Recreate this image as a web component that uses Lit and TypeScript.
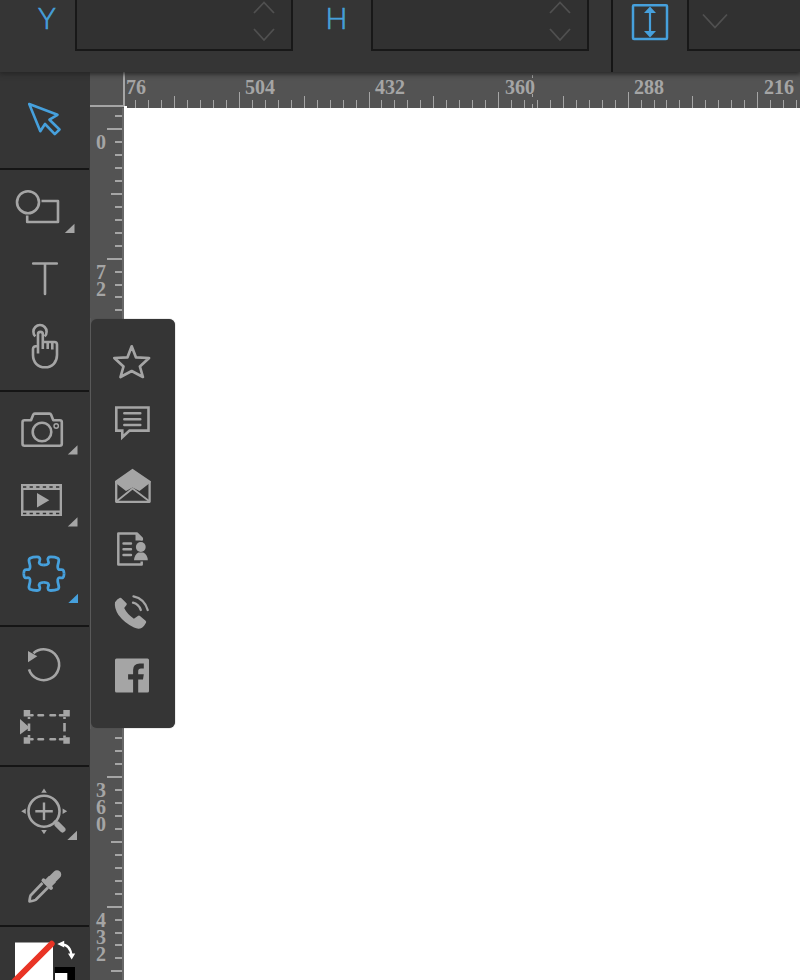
import { LitElement, html, svg, css } from "lit";
import { customElement } from "lit/decorators.js";

const corner = (x: number, y: number) =>
  svg`<path class="fill" d="M${x} ${y}v-9.3l-9.7 9.3z"/>`;

// Each tool occupies a row of the palette; its view box is expressed in palette space.
const tools = [
  { group: 0, y: 72, h: 96, active: true, art: svg`<path d="M29.2 104l28.3 10.8-8 4.9 10 9.8-4.7 4.6-9.8-10.1-4.7 7.2z"/>` },
  { group: 1, y: 170, h: 75, art: svg`<circle cx="28" cy="202.2" r="11"/><path d="M41.5 201H58v21H27.2v-6.5"/>${corner(74.5, 233)}` },
  { group: 1, y: 245, h: 67, art: svg`<path d="M33.2 263.5h23.6M45 264v30" stroke-linecap="round"/>` },
  { group: 1, y: 312, h: 78, art: svg`<path d="M35.300 336.300a6.600 6.600 0 1 1 9.400 0"/><path d="M38 353.500v-19.200a2.400 2.400 0 0 1 4.800 0V349M43 342H54.500q2.500 0 2.500 2.500V355c0 7-4.500 12.300-12 12.300s-12-5.300-12-12.300v-6q0-3 4.500-3M47.700 342v7M52.300 342v7.500"/>` },
  { group: 2, y: 392, h: 73, art: svg`<path d="M24.500 420.300H31l2.200-5.500q.4-1.200 1.600-1.200H49.500q1.200 0 1.600 1.200l2.200 5.500H59.800q2 0 2 2V443.800q0 2-2 2H24.500q-2 0-2-2V422.300q0-2 2-2z"/><circle cx="42" cy="432" r="9.300"/><circle cx="56.200" cy="426" r="2.200" stroke-width="1.400"/>${corner(77.5, 454.5)}` },
  { group: 2, y: 465, h: 75, art: svg`<path class="fill" fill-rule="evenodd" d="M21 484h41v32H21zM23.500 490v20.500h36.200v-20.500z"/><path class="hole" d="M23 487h37M23 513.500h37"/><path class="fill" d="M37 493l12.300 7.300L37 507.500z"/>${corner(77.5, 526.5)}` },
  { group: 2, y: 540, h: 85, active: true, art: svg`<g stroke-width="2.800" transform="translate(43.900 573.700)">${[[1, 1], [-1, 1], [1, -1], [-1, -1]].map(([a, b]) => svg`<path transform="scale(${a} ${b})" d="M0-8.700c4.200 0 5.500-1.600 4.300-4.200-1.200-2.800.4-3.900 2.600-3.900 3 0 5.200.4 7 1.300 1.800 1 1 3 .5 5-.8 3-.8 5.500.5 6.300 1.700 1 5-2.300 5.300 4.200"/>`)}</g>${corner(78, 603)}` },
  { group: 3, y: 627, h: 70, art: svg`<path d="M33.500 653.200A15.400 15.400 0 1 1 29 669.300"/><path class="fill" d="M28 651l9.300 5.300-9.300 6z"/>` },
  { group: 3, y: 697, h: 68, art: svg`<path class="fill" d="M23.700 710h6.500v6.500h-6.500zM63.300 710h6.500v6.500h-6.500zM23.700 737.300h6.500v6.500h-6.500zM63.300 737.300h6.500v6.500h-6.500zM20 719l9.500 8.500-9.500 7z"/><path stroke-linecap="round" d="M31 715.200h1.500M38.500 715.200h4.500M50.500 715.200h4.500M60 715.200h3M31 739.300h1.500M38.500 739.300h4.500M50.500 739.300h4.500M60 739.300h3"/><path d="M64.500 723v8.500M29 717v2M29 723.500v7.500M29 735v2.500M64.500 717v2M64.500 735.500v2"/>` },
  { group: 4, y: 767, h: 83, art: svg`<circle cx="44" cy="811.200" r="15.500"/><path stroke-width="2.400" d="M35.300 811.200h17.500M44 802.500V820"/><path stroke-width="6" stroke-linecap="round" d="M57.500 824.500l5 5"/><path d="M54 821l3 3"/><path class="fill" d="M44 788.500l2.800 4.200h-5.600zM44 834.300l2.800-4.200h-5.600zM21.200 811.300l4.600-2.700v5.400zM67.200 811.300l-4.600-2.700v5.400z"/>${corner(77, 840)}` },
  { group: 4, y: 850, h: 75, art: svg`<path stroke-width="8.500" stroke-linecap="round" d="M57 874.500l-6 6"/><path stroke-width="9.500" d="M52.500 879l-6 6"/><path stroke-width="4" stroke-linecap="round" d="M43.500 880.300l7.500 7.500"/><path stroke-width="2.700" d="M42.500 883L30.800 895.200q-.8 1-1.300 6.300 5-.8 6.300-1.800L48 887.500"/>` },
];

const flyoutIcons = [
  svg`<path stroke-width="2.700" d="M131.700 346.300l4.200 11 13.200.7-9.200 8.500 3 10.500-11.200-6-11.200 6 3-10.500-9.200-8.500 13.200-.7z"/>`,
  svg`<path stroke-width="2.600" stroke-linejoin="miter" d="M116.300 407.500h32.200v23.100h-19l-7.200 6.700v-6.700h-6z"/><path stroke-width="2.500" stroke-linecap="round" d="M124.300 413.200h16M124.300 419.200h16M124.300 425h16"/>`,
  svg`<path class="fill" d="M115 481l17.500-12.200L150.500 481v1.500l-11 8.500-7-3.500-6.500 3.500-11-8.500z"/><path stroke-width="2.300" d="M116.200 481v20.800h33.400V481"/><path stroke-width="1.800" d="M117 501l15.500-12.500L149 501"/>`,
  svg`<path stroke-width="2.500" d="M141.700 561.500v3h-23.400v-31h18.500l5 5v2"/><path class="fill" d="M135.500 533.500l7 7h-7z"/><path stroke-width="2.400" stroke-linecap="round" d="M123.500 543.500h7.500M123.500 549.300h7.500M123.500 555h7.500"/><circle class="fill" cx="140.800" cy="547" r="4.900"/><path class="fill" d="M134 560.300q.5-5.800 4.300-7.800h5q4.200 2 4.500 7.800z"/>`,
  svg`<path class="fill" d="M115 602.300q2-3.300 5-4.500.8-.3 1.500.4l5 5q.7.7 0 1.700l-2.300 3.200q2.800 6 9.700 10.700l4.300-3q1-.6 1.800.2l5.600 4.800q1 .9.4 1.900-1.500 3-4 5-3.500 2-8-.2-9.500-4.500-15.500-12.500-4.500-7-3.500-12.700z"/><path stroke-width="2.300" stroke-linecap="round" d="M133 602.700q5.500 1.200 7.800 7.300M133.500 596.300q11 2.300 14.200 13.700"/>`,
  svg`<path class="fill" fill-rule="evenodd" d="M116.500 658.500h31q1.500 0 1.500 1.500v31q0 1.500-1.500 1.500h-9.300V679.500h4.800l.8-5.200h-5.600v-3q0-2.800 2.800-2.800h2.800v-5h-4q-6.700 0-6.700 6.500v4.300h-5v5.200h5v13h-16.600q-1.500 0-1.500-1.500v-31q0-1.500 1.500-1.500z"/>`,
];

@customElement("tool-palette")
class ToolPalette extends LitElement {
  static styles = css`
    :host { display: block; width: 90px; background: #353535; overflow: hidden; flex: none; }
    .group { width: 89px; border-bottom: 2px solid #151515; }
    svg { display: block; fill: none; stroke: #a5a5a5; stroke-width: 2.6; stroke-linejoin: round; --ink: #a5a5a5; }
    svg.active { stroke: #46a0dc; --ink: #46a0dc; }
    .fill { fill: var(--ink); stroke: none; }
    .hole { stroke: #303030; stroke-width: 1.700; stroke-dasharray: 3.300 3.300; }
    .plain { stroke: none; }
    .swap { fill: none; stroke: #fff; stroke-width: 2.200; }
  `;
  render() {
    return html`
      ${[0, 1, 2, 3, 4].map((g) => html`<div class="group">
        ${tools.filter((t) => t.group === g).map((t) => html`
          <svg class=${t.active ? "active" : ""} width="89" height=${t.h} viewBox="0 ${t.y} 89 ${t.h}">${t.art}</svg>`)}
      </div>`)}
      <svg class="plain" width="89" height="53" viewBox="0 927 89 53">
        <path fill="#000" d="M54.700 967H75v13H54.700z"/>
        <path fill="#fff" d="M55 973h12.300v7H55zM15 942.500h38V980H15z"/>
        <path stroke="#e93425" stroke-width="6" stroke-linecap="round" d="M51.700 943.800L15 980.500"/>
        <path class="swap" d="M61 944.300q9.700 0 10.500 12"/>
        <path fill="#fff" d="M57.200 944l7-3.200v6.600zM71.700 959.500l-3.700-6h7.200z"/>
      </svg>`;
  }
}

@customElement("canvas-rulers")
class CanvasRulers extends LitElement {
  static styles = css`
    :host { display: grid; grid-template: 36px 872px / 34px 676px; background: #535353; }
    svg { display: block; }
    text { font: bold 20px "Liberation Serif", serif; fill: #a5a5a5; }
    .page { background: #fff; }
    .tick { fill: #a5a5a5; }
  `;
  render() {
    const across = [], down = [];
    for (let i = 2; i < 54; i++) {
      const top = i % 10 === 0 ? 92 : i % 5 === 0 ? 96 : 100;
      across.push(svg`<path class="tick" d="M${Math.floor(109.9 + i * 12.955)} ${top}h1v${108 - top}h-1z"/>`);
    }
    for (let i = -1; i < 67; i++) {
      const left = i % 10 === 0 ? 107 : i % 5 === 0 ? 111 : 115;
      down.push(svg`<path class="tick" d="M${left} ${Math.round(128 + i * 12.96)}h${122 - left}v2h${left - 122}z"/>`);
    }
    return html`
      <svg width="34" height="36" viewBox="90 72 34 36"><path class="tick" d="M90 105h34v2H90zM123 72h1v34h-1z"/></svg>
      <svg width="676" height="36" viewBox="124 72 676 36">
        <path class="tick" d="M124 72h1v34h-1z"/>${across}
        ${["76", "504", "432", "360", "288", "216"].map((n, i) => svg`<text x=${[126, 245, 375, 505, 634, 764][i]} y="94">${n}</text>`)}
        <path class="tick" d="M532 75h1v3h-1zM532 94h1v3h-1zM532 104h1v4h-1z"/>
        <path fill="#fff" d="M124 106h3v2h-3z"/>
      </svg>
      <svg width="34" height="872" viewBox="90 108 34 872">
        <path fill="#686868" d="M122 108h2v872h-2z"/>${down}
        ${[["0", 149], ["72", 279], ["360", 797], ["432", 927]].map(([n, y]) =>
          [...(n as string)].map((c, i) => svg`<text x="96" y=${(y as number) + i * 17}>${c}</text>`))}
      </svg>
      <div class="page"></div>`;
  }
}

@customElement("app-root")
class AppRoot extends LitElement {
  static styles = css`
    :host { display: block; position: relative; width: 800px; height: 980px; overflow: hidden; background: #353535; }
    .bar { position: relative; z-index: 1; display: flex; box-sizing: border-box; height: 72px; background: #353535; box-shadow: 0 1px 5px 1px #252525; }
    .bar > * { flex: none; }
    .label { box-sizing: border-box; height: 50px; font: 300 29px/35px Lato, sans-serif; color: #46a0dc; -webkit-text-stroke: 0.7px #46a0dc; text-align: center; }
    .y { width: 75px; padding-left: 19px; }
    .h { width: 78px; padding-left: 9px; }
    .field { box-sizing: border-box; width: 218px; height: 51px; border: solid #181818; border-width: 0 2px 2px; background: #313131; display: flex; justify-content: flex-end; padding-right: 16px; }
    .mode { box-sizing: border-box; width: 76px; margin-left: 22px; padding: 3px 0 0 18px; border-left: 2px solid #151515; }
    .select { width: 120px; justify-content: flex-start; padding: 12px 0 0 13px; }
    .chevron { fill: none; stroke: #505050; stroke-width: 1.800; }
    .body { display: flex; height: 908px; }
    .flyout { position: absolute; z-index: 2; left: 90px; top: 318px; width: 85px; height: 411px; box-sizing: border-box; border-left: 1px solid #5c5c5c; background: linear-gradient(#535353, #535353) left / 8px 100% no-repeat; }
    .panel { height: 409px; margin-top: 1px; background: #353535; border-radius: 6px; padding-top: 12px; box-sizing: border-box; box-shadow: 0 0 1px #444; }
    .panel svg { display: block; fill: none; stroke: #a5a5a5; stroke-linejoin: round; }
    .fill { fill: #a5a5a5; stroke: none; }
  `;
  render() {
    const stepper = html`<svg class="chevron" width="22" height="44" viewBox="0 0 22 44"><path d="M1 13L11 2.500 21 13M1 29l10 11 10-11"/></svg>`;
    return html`
      <div class="bar">
        <div class="label y">Y</div><div class="field">${stepper}</div>
        <div class="label h">H</div><div class="field">${stepper}</div>
        <div class="mode"><svg width="38" height="38" viewBox="631 3 38 38">
          <rect x="633" y="5.200" width="34" height="33.700" rx="1" fill="none" stroke="#46a0dc" stroke-width="2.500"/>
          <path d="M650 10v25" stroke="#46a0dc" stroke-width="2.200"/><path fill="#46a0dc" d="M650 6.500l6 6.500h-12zM650 37.500l6-6.500h-12z"/>
        </svg></div>
        <div class="field select"><svg class="chevron" width="28" height="18"><path d="M1 2.500l12 13 12-13"/></svg></div>
      </div>
      <div class="body"><tool-palette></tool-palette><canvas-rulers></canvas-rulers></div>
      <div class="flyout"><div class="panel">
        ${flyoutIcons.map((icon, i) => html`<svg width="84" height="63" viewBox="91 ${331 + i * 63} 84 63">${icon}</svg>`)}
      </div></div>`;
  }
}
